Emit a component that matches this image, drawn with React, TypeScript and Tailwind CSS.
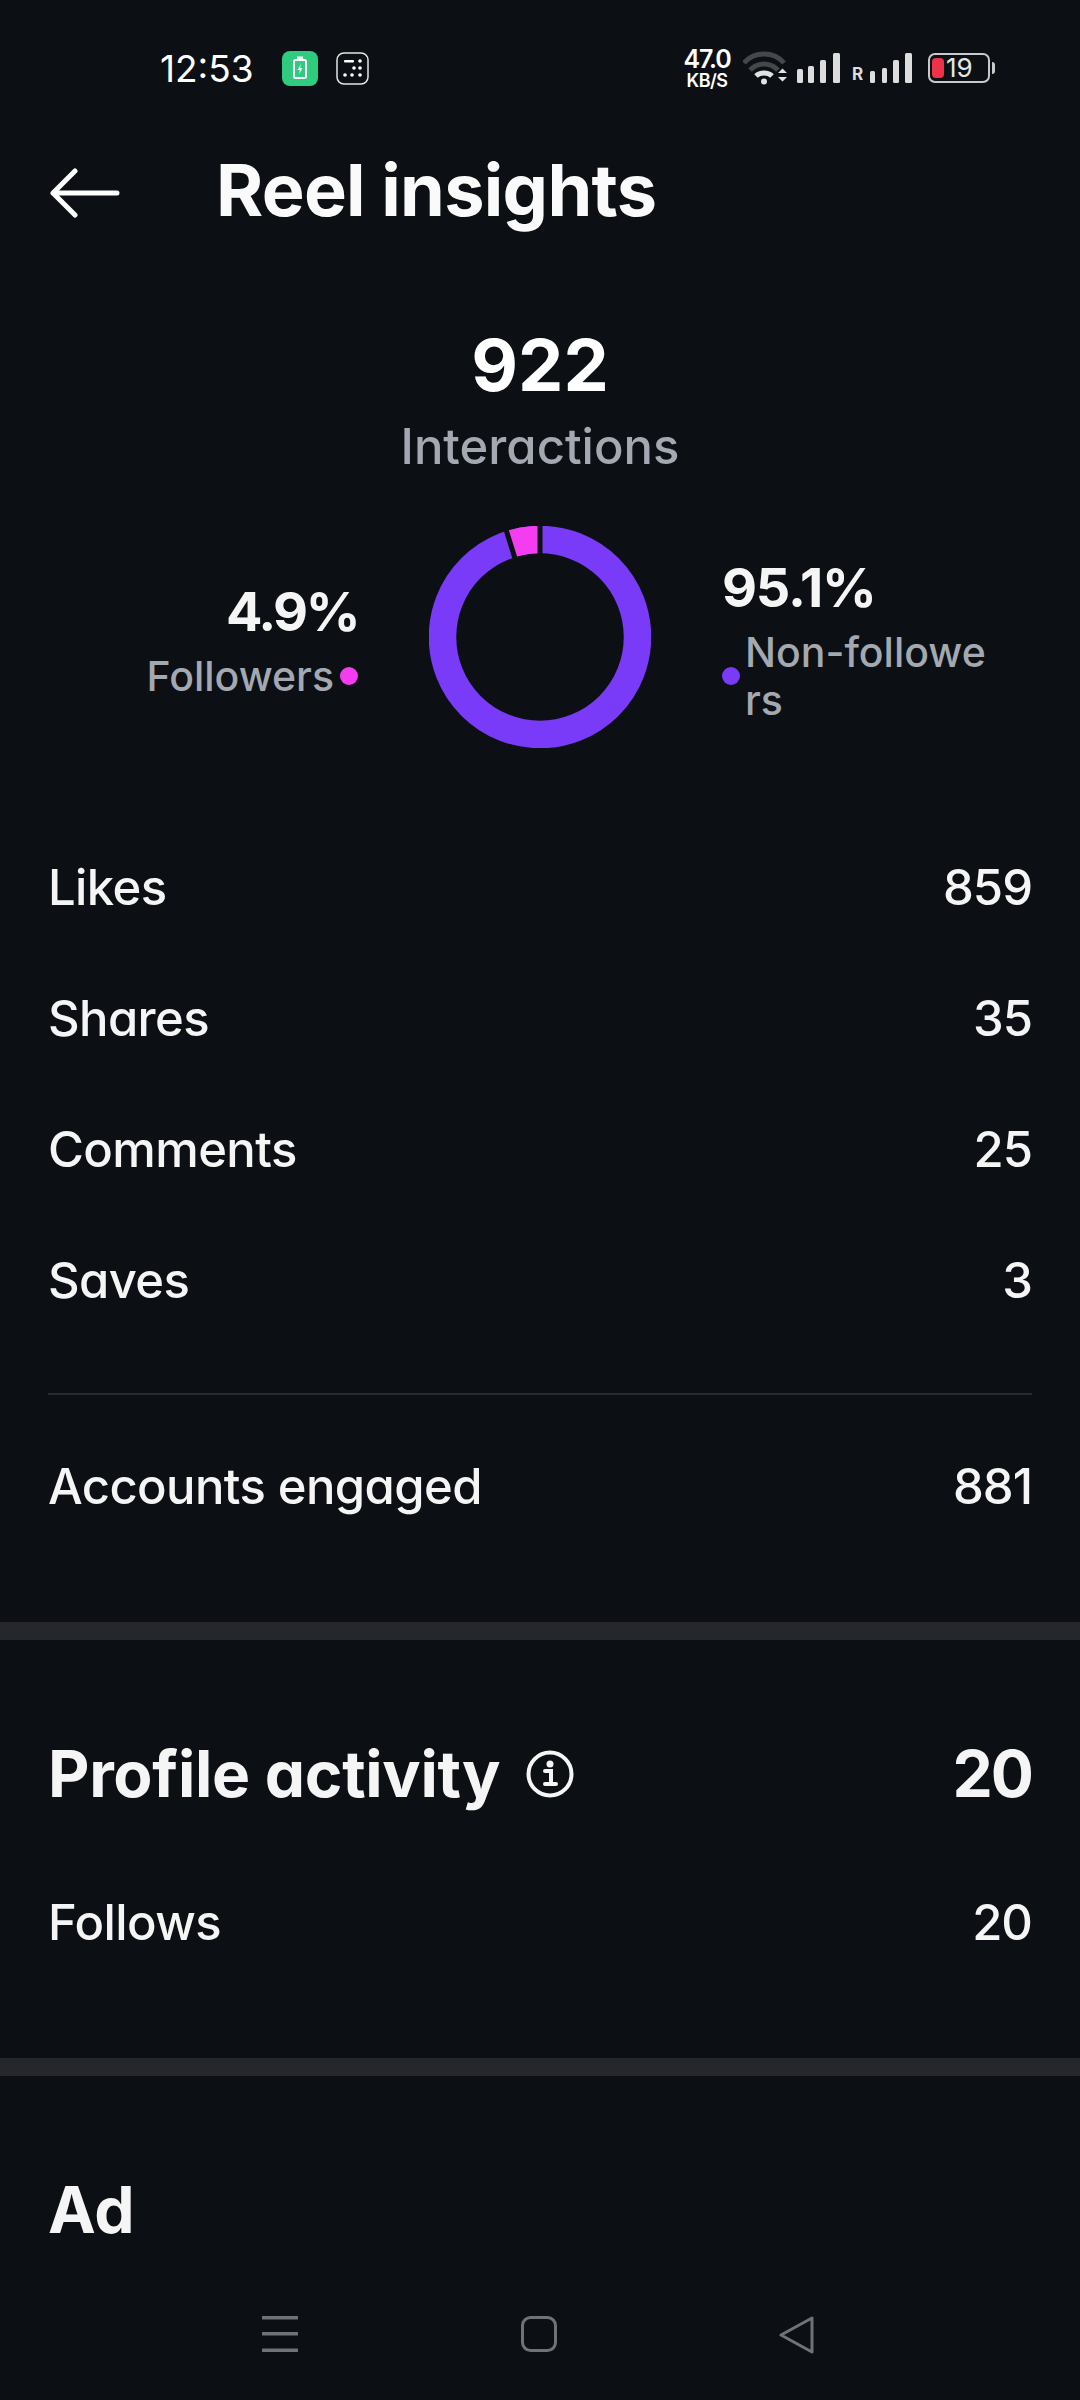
const font = "[font-family:Inter,'Liberation_Sans',sans-serif] [font-feature-settings:'cv11']";

const interactionRows = [
  { label: "Likes", value: "859" },
  { label: "Shares", value: "35" },
  { label: "Comments", value: "25" },
  { label: "Saves", value: "3" },
];

function StatRow({ label, value }: { label: string; value: string }) {
  return (
    <div className="flex h-[131px] items-center justify-between px-[48px] pt-[2px] text-[49px] font-medium leading-none text-[#f5f5f5]">
      <span className="tracking-[-0.6px]">{label}</span>
      <span className="tracking-[-1px]">{value}</span>
    </div>
  );
}

function Donut() {
  return (
    <svg width="222" height="222" viewBox="0 0 222 222" className="shrink-0">
      <circle cx="111" cy="111" r="97.5" fill="none" stroke="#7a3bf8" strokeWidth="27.5" />
      <circle
        cx="111"
        cy="111"
        r="97.5"
        fill="none"
        stroke="#f43df0"
        strokeWidth="27.5"
        strokeDasharray="30 600"
        transform="rotate(-107.6 111 111)"
      />
      <line x1="111" y1="30" x2="111" y2="-4" stroke="#0c1014" strokeWidth="5" />
      <line x1="86.5" y1="34" x2="76.5" y2="2" stroke="#0c1014" strokeWidth="5" />
    </svg>
  );
}

function StatusBar() {
  return (
    <div className="flex h-[136px] shrink-0 items-center pl-[160px] pr-[90px] text-white">
      <span className="w-[92px] text-[37px] leading-none">12:53</span>
      <div className="ml-[30px] flex h-[35px] w-[36px] items-center justify-center rounded-[8px] bg-[#2fcb7f]">
        <svg width="16" height="24" viewBox="0 0 16 24" fill="none">
          <rect x="2" y="4" width="12" height="18" rx="1.5" stroke="white" strokeWidth="2" />
          <rect x="5" y="0.5" width="6" height="3" fill="white" />
          <path d="M9 8l-3.5 6H8l-1 4 3.5-6H8z" fill="white" />
        </svg>
      </div>
      <svg className="ml-[18px]" width="33" height="33" viewBox="0 0 33 33" fill="none">
        <rect x="1" y="1" width="31" height="31" rx="7" stroke="#e5e5e5" strokeWidth="1.5" />
        <rect x="8" y="8" width="10" height="2.5" rx="1" fill="white" />
        <g fill="white">
          <circle cx="24" cy="9" r="1.8" />
          <circle cx="18" cy="16" r="1.8" />
          <circle cx="24" cy="16" r="1.8" />
          <circle cx="9" cy="23" r="1.8" />
          <circle cx="16" cy="23" r="1.8" />
          <circle cx="24" cy="23" r="1.8" />
        </g>
      </svg>

      <div className="ml-auto flex items-center">
        <div className="flex w-[48px] flex-col items-center font-semibold leading-none">
          <span className="text-[25px] tracking-[-1.2px]">47.0</span>
          <span className="text-[18px] tracking-[-0.5px]">KB/S</span>
        </div>
        <svg className="ml-[12px]" width="46" height="34" viewBox="0 0 46 34" fill="none">
          <path d="M1 12C11 0 31 0 41 12" stroke="#44474b" strokeWidth="5" />
          <path d="M7 19c8-8 20-8 28 0" stroke="#44474b" strokeWidth="5" />
          <path d="M13 25c4-4 12-4 16 0" stroke="#e2e2e2" strokeWidth="5" />
          <circle cx="21" cy="30.500" r="3" fill="#e2e2e2" />
          <path d="M35 22l4.500-4.500 4.500 4.500zM35 26l4.500 4.500 4.500-4.500z" fill="#e2e2e2" />
        </svg>
        <svg className="ml-[8px]" width="43" height="30" viewBox="0 0 43 30" fill="#dddddd">
          <rect x="0" y="16" width="6" height="14" rx="1.5" />
          <rect x="11" y="13" width="6" height="17" rx="1.5" />
          <rect x="23" y="7" width="6" height="23" rx="1.5" />
          <rect x="36" y="0" width="7" height="30" rx="1.5" />
        </svg>
        <span className="ml-[12px] mt-[12px] w-[12px] text-[17px] font-bold leading-none text-[#dddddd]">R</span>
        <svg className="ml-[6px]" width="42" height="30" viewBox="0 0 42 30" fill="#dddddd">
          <rect x="0" y="18" width="5" height="12" rx="1.5" />
          <rect x="12" y="15" width="5" height="15" rx="1.5" />
          <rect x="23" y="7" width="6" height="23" rx="1.5" />
          <rect x="35" y="0" width="7" height="30" rx="1.5" />
        </svg>
        <div className="relative ml-[16px] flex h-[30px] w-[62px] items-center rounded-[7px] border-2 border-[#c9c9c9] pl-[2px]">
          <div className="h-[20px] w-[12px] rounded-[4px] bg-[#ee3348]" />
          <span className="ml-[2px] text-[26px] leading-none text-[#e5e5e5]">19</span>
          <div className="absolute right-[-7px] top-[7px] h-[12px] w-[3px] rounded-r bg-[#c9c9c9]" />
        </div>
      </div>
    </div>
  );
}

export default function App() {
  return (
    <div className={`${font} flex h-[2400px] w-[1080px] flex-col overflow-hidden bg-[#0c1014]`}>
      <StatusBar />

      <div className="flex h-[108px] shrink-0 items-center pl-[50px]">
        <svg className="mt-[6px]" width="70" height="50" viewBox="0 0 70 50" fill="none" stroke="white" strokeWidth="5" strokeLinecap="round" strokeLinejoin="round">
          <path d="M67 25H3M25 3L3 25l22 22" />
        </svg>
        <h1 className="ml-[96px] text-[72px] font-bold leading-none tracking-[-0.7px] text-[#fafafa]">Reel insights</h1>
      </div>

      <div className="mt-[71px] text-center text-[72px] font-bold leading-[100px] text-white">922</div>
      <div className="text-center text-[49px] font-medium leading-[64px] text-[#a3a8b1]">Interactions</div>

      <div className="mt-[47px] flex h-[222px] shrink-0">
        <div className="flex w-[358px] flex-col items-end pt-[56px]">
          <span className="text-[54px] font-bold leading-[60px] tracking-[-2.5px] text-[#f5f5f5]">4.9%</span>
          <div className="mt-[4px] flex items-center text-[41px] font-medium leading-[60px] text-[#a3a8b1]">
            Followers
            <span className="ml-[6px] h-[18px] w-[18px] rounded-full bg-[#f43df0]" />
          </div>
        </div>
        <div className="ml-[71px]">
          <Donut />
        </div>
        <div className="ml-[71px] flex flex-col pt-[32px]">
          <span className="text-[54px] font-bold leading-[60px] tracking-[-1.2px] text-[#f5f5f5]">95.1%</span>
          <div className="mt-[10px] flex items-center">
            <span className="h-[18px] w-[18px] rounded-full bg-[#7a3bf8]" />
            <span className="ml-[5px] w-[250px] break-all text-[41px] font-medium leading-[48px] text-[#a3a8b1]">Non-followers</span>
          </div>
        </div>
      </div>

      <div className="mt-[73px]">
        {interactionRows.map((row) => (
          <StatRow key={row.label} label={row.label} value={row.value} />
        ))}
      </div>

      <div className="mx-[48px] mt-[48px] h-[2px] shrink-0 bg-[#272b30]" />
      <div className="mt-[25px]">
        <StatRow label="Accounts engaged" value="881" />
      </div>

      <div className="mt-[71px] h-[18px] shrink-0 bg-[#25272c]" />

      <div className="mt-[93px] flex h-[80px] shrink-0 items-center px-[48px] pt-[2px] text-[#f5f5f5]">
        <span className="text-[64px] font-bold leading-none tracking-[-0.3px]">Profile activity</span>
        <svg className="ml-[26px]" width="48" height="48" viewBox="0 0 48 48" fill="none">
          <circle cx="24" cy="24" r="21.500" stroke="#f5f5f5" strokeWidth="4" />
          <circle cx="24" cy="14" r="3.500" fill="#f5f5f5" />
          <path d="M19 21h6v12M19 34h11" stroke="#f5f5f5" strokeWidth="4" strokeLinecap="round" />
        </svg>
        <span className="ml-auto text-[64px] font-bold leading-none tracking-[-2px]">20</span>
      </div>

      <div className="mt-[43px]">
        <StatRow label="Follows" value="20" />
      </div>

      <div className="mt-[71px] h-[18px] shrink-0 bg-[#25272c]" />

      <div className="mt-[94px] h-[80px] shrink-0 px-[48px] text-[64px] font-bold leading-[80px] text-[#f5f5f5]">Ad</div>

      <div className="mt-auto flex h-[132px] shrink-0 items-start pl-[262px] pt-[48px]">
        <svg width="36" height="36" viewBox="0 0 36 36" fill="#6f7276">
          <rect y="0" width="36" height="3.500" />
          <rect y="16" width="36" height="3.500" />
          <rect y="32.500" width="36" height="3.500" />
        </svg>
        <svg className="ml-[223px]" width="36" height="36" viewBox="0 0 36 36" fill="none" stroke="#6f7276" strokeWidth="3">
          <rect x="1.500" y="1.500" width="33" height="33" rx="8" />
        </svg>
        <svg className="ml-[222px]" width="36" height="38" viewBox="0 0 36 38" fill="none" stroke="#6f7276" strokeWidth="3" strokeLinejoin="round">
          <path d="M2 19L33 2v34z" />
        </svg>
      </div>
    </div>
  );
}
